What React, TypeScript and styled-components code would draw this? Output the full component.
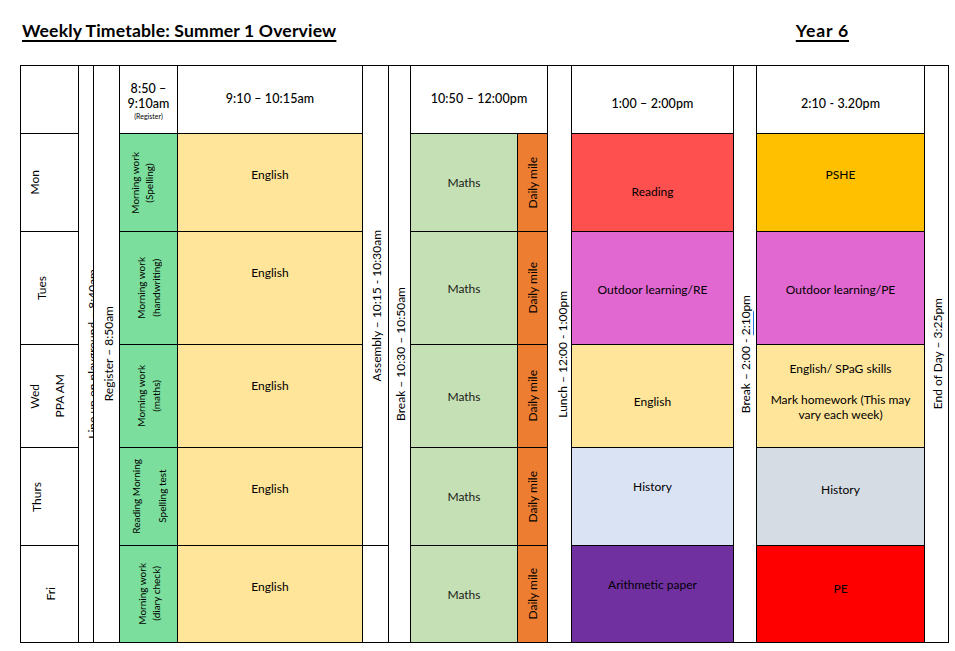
import React from "react";
import styled, { createGlobalStyle, css } from "styled-components";

const GlobalStyle = createGlobalStyle`
  html, body { margin: 0; padding: 0; background: #ffffff; }
  body { font-family: Lato, "Noto Sans", sans-serif; color: #000; }
  * { box-sizing: border-box; }
`;

const Page = styled.div`
  width: 955px;
  height: 651px;
  padding-left: 20px;
  overflow: hidden;
`;

const TitleBar = styled.header`
  height: 65px;
  width: 929px;
  display: flex;
  align-items: flex-start;
  padding-top: 21px;
`;

const Title = styled.h1`
  margin: 0;
  font-size: 17.6px;
  line-height: 20px;
  font-weight: 700;
  letter-spacing: 0.15px;
  text-decoration: underline;
  text-decoration-thickness: 1.5px;
  text-underline-offset: 3px;
  padding-left: 2px;
`;

const YearLabel = styled(Title)`
  margin-left: auto;
  margin-right: 100px;
  letter-spacing: 0.8px;
`;

const Grid = styled.div`
  display: grid;
  grid-template-columns: 57px 14px 25px 57px 184px 25px 21px 106px 29px 23px 161px 22px 167px 23px;
  grid-template-rows: 67px 97px 112px 102px 97px 96px;
  gap: 1px;
  padding: 1px;
  background: #000;
  width: max-content;
`;

type CellProps = {
  $col: number;
  $row: number;
  $colSpan?: number;
  $rowSpan?: number;
  $bg?: string;
  $top?: number;
  $shift?: number;
  $padLeft?: number;
  $justify?: string;
};

const Cell = styled.div<CellProps>`
  grid-column: ${(p) => p.$col} / span ${(p) => p.$colSpan ?? 1};
  grid-row: ${(p) => p.$row} / span ${(p) => p.$rowSpan ?? 1};
  background: ${(p) => p.$bg ?? "#ffffff"};
  display: flex;
  flex-direction: column;
  align-items: center;
  text-align: center;
  overflow: hidden;
  ${(p) =>
    p.$top !== undefined
      ? css`
          justify-content: flex-start;
          padding-top: ${p.$top}px;
        `
      : css`
          justify-content: center;
          padding-top: ${Math.max(0, (p.$shift ?? 0) * 2)}px;
          padding-bottom: ${Math.max(0, -(p.$shift ?? 0) * 2)}px;
        `}
`;

const SideCell = styled(Cell)`
  flex-direction: row;
  align-items: center;
  justify-content: ${(p) => p.$justify ?? "center"};
  padding-left: ${(p) => p.$padLeft ?? 0}px;
  padding-top: ${(p) => Math.max(0, (p.$shift ?? 0) * 2)}px;
  padding-bottom: ${(p) => Math.max(0, -(p.$shift ?? 0) * 2)}px;
`;

const Vertical = styled.span<{ $size?: number; $lh?: number }>`
  writing-mode: vertical-rl;
  transform: rotate(180deg);
  white-space: nowrap;
  font-size: ${(p) => p.$size ?? 12}px;
  line-height: ${(p) => p.$lh ?? 14}px;
  text-align: center;
`;

const HeadText = styled.div`
  font-size: 12.5px;
  line-height: 15px;
  font-weight: 500;
  letter-spacing: 0.1px;
`;

const TinyText = styled.div`
  font-size: 7px;
  line-height: 10px;
`;

const Lesson = styled.div<{ $light?: boolean }>`
  font-size: 12px;
  line-height: 15px;
  color: ${(p) => (p.$light ? "#1a1a1a" : "#000")};
  padding: 0 6px;
`;

const Para = styled.p`
  margin: 0;
  & + & { margin-top: 16px; }
`;

const Marked = styled.span`
  border-left: 1.5px solid #2f6fe0;
`;

const DayGap = styled.span`
  display: inline-block;
  width: 11px;
`;

const YELLOW = "#FFE599";
const MORNING = "#7BDE9C";
const MATHS = "#C5E0B4";
const MILE = "#ED7D31";

const days = [
  { row: 2, pad: 7, label: ["Mon"] },
  { row: 3, pad: 14, label: ["Tues"] },
  { row: 4, pad: 7, label: ["Wed", "PPA AM"] },
  { row: 5, pad: 9, label: ["Thurs"] },
  { row: 6, pad: 23, label: ["Fri"] },
];

const morning = [
  { row: 2, lines: ["Morning work", "(Spelling)"], lh: 14, padRight: 14 },
  { row: 3, lines: ["Morning work", "(handwriting)"], lh: 15, padRight: 0 },
  { row: 4, lines: ["Morning work", "(maths)"], lh: 15, padRight: 0 },
  { row: 5, lines: ["Reading Morning", "Spelling test"], lh: 26, padRight: 0 },
  { row: 6, lines: ["Morning work", "(diary check)"], lh: 14, padRight: 0 },
];

const MorningCell = styled(SideCell)<{ $padRight: number }>`
  padding-right: ${(p) => p.$padRight}px;
`;

const afternoon1 = [
  { row: 2, text: "Reading", bg: "#FF5050", shift: 9 },
  { row: 3, text: "Outdoor learning/RE", bg: "#E068D0", shift: 1 },
  { row: 4, text: "English", bg: YELLOW, shift: 5 },
  { row: 5, text: "History", bg: "#DAE3F3", shift: -10 },
  { row: 6, text: "Arithmetic paper", bg: "#7030A0", shift: -10 },
];

const afternoon2 = [
  { row: 2, text: "PSHE", bg: "#FFC000", shift: -8 },
  { row: 3, text: "Outdoor learning/PE", bg: "#E068D0", shift: 1 },
  { row: 5, text: "History", bg: "#D6DCE4", shift: -7 },
  { row: 6, text: "PE", bg: "#FF0000", shift: -6 },
];

export default function App() {
  return (
    <Page>
      <GlobalStyle />
      <TitleBar>
        <Title>Weekly Timetable: Summer 1 Overview</Title>
        <YearLabel>Year 6</YearLabel>
      </TitleBar>
      <Grid>
        <Cell $col={1} $row={1} />
        <SideCell $col={2} $row={1} $rowSpan={6} $justify="flex-start" $padLeft={7}>
          <Vertical>Line up on playground – 8:40am</Vertical>
        </SideCell>
        <SideCell $col={3} $row={1} $rowSpan={6} $padLeft={4}>
          <Vertical>Register – 8:50am</Vertical>
        </SideCell>
        <Cell $col={4} $row={1} $shift={1}>
          <HeadText>8:50 –</HeadText>
          <HeadText>9:10am</HeadText>
          <TinyText>(Register)</TinyText>
        </Cell>
        <Cell $col={5} $row={1} $shift={-1}>
          <HeadText>9:10 – 10:15am</HeadText>
        </Cell>
        <SideCell $col={6} $row={1} $rowSpan={5} $padLeft={3}>
          <Vertical>Assembly – 10:15 - 10:30am</Vertical>
        </SideCell>
        <Cell $col={6} $row={6} />
        <SideCell $col={7} $row={1} $rowSpan={6} $padLeft={3}>
          <Vertical>Break – 10:30 – 10:50am</Vertical>
        </SideCell>
        <Cell $col={8} $colSpan={2} $row={1} $shift={-1}>
          <HeadText>10:50 – 12:00pm</HeadText>
        </Cell>
        <SideCell $col={10} $row={1} $rowSpan={6} $padLeft={6}>
          <Vertical>Lunch – 12:00 - 1:00pm</Vertical>
        </SideCell>
        <Cell $col={11} $row={1} $shift={4}>
          <HeadText>1:00 – 2:00pm</HeadText>
        </Cell>
        <SideCell $col={12} $row={1} $rowSpan={6} $padLeft={2}>
          <Vertical>
            Break – 2:00 - <Marked>2:10</Marked>pm
          </Vertical>
        </SideCell>
        <Cell $col={13} $row={1} $shift={4}>
          <HeadText>2:10 - 3.20pm</HeadText>
        </Cell>
        <SideCell $col={14} $row={1} $rowSpan={6} $padLeft={3}>
          <Vertical>End of Day – 3:25pm</Vertical>
        </SideCell>

        {days.map((d) => (
          <SideCell key={d.row} $col={1} $row={d.row} $justify="flex-start" $padLeft={d.pad}>
            {d.label.map((l, i) => (
              <React.Fragment key={l}>
                {i > 0 && <DayGap />}
                <Vertical $size={12}>{l}</Vertical>
              </React.Fragment>
            ))}
          </SideCell>
        ))}

        {morning.map((m) => (
          <MorningCell key={m.row} $col={4} $row={m.row} $bg={MORNING} $padRight={m.padRight}>
            <Vertical $size={10} $lh={m.lh}>
              {m.lines[0]}
              <br />
              {m.lines[1]}
            </Vertical>
          </MorningCell>
        ))}

        {[2, 3, 4, 5, 6].map((r) => (
          <Cell key={r} $col={5} $row={r} $bg={YELLOW} $top={33}>
            <Lesson>English</Lesson>
          </Cell>
        ))}

        {[2, 3, 4, 5, 6].map((r) => (
          <React.Fragment key={r}>
            <Cell $col={8} $row={r} $bg={MATHS}>
              <Lesson $light>Maths</Lesson>
            </Cell>
            <SideCell $col={9} $row={r} $bg={MILE} $padLeft={1}>
              <Vertical $size={12}>Daily mile</Vertical>
            </SideCell>
          </React.Fragment>
        ))}

        {afternoon1.map((a) => (
          <Cell key={a.row} $col={11} $row={a.row} $bg={a.bg} $shift={a.shift}>
            <Lesson>{a.text}</Lesson>
          </Cell>
        ))}

        {afternoon2.map((a) => (
          <Cell key={a.row} $col={13} $row={a.row} $bg={a.bg} $shift={a.shift}>
            <Lesson>{a.text}</Lesson>
          </Cell>
        ))}
        <Cell $col={13} $row={4} $bg={YELLOW} $shift={-5}>
          <Lesson>
            <Para>English/ SPaG skills</Para>
            <Para>
              Mark homework (This may
              <br />
              vary each week)
            </Para>
          </Lesson>
        </Cell>
      </Grid>
    </Page>
  );
}
